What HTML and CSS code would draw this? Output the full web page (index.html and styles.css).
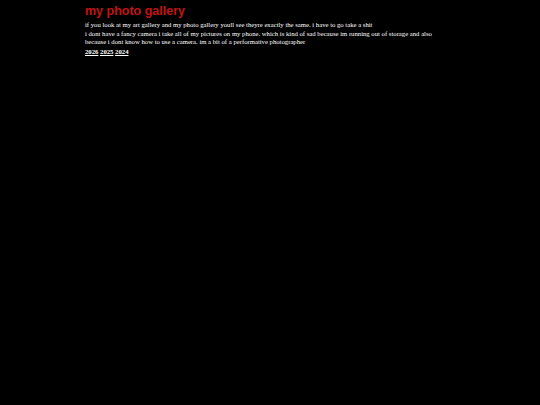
FILE: index.html
```html
<!DOCTYPE html>
<html>
<head>
<meta charset="utf-8">
<link rel="stylesheet" href="styles.css">
</head>
<body>
<div class="page">
  <h1 class="title">my photo gallery</h1>
  <p class="intro">if you look at my art gallery and my photo gallery youll see theyre exactly the same. i have to go take a shit</p>
  <p class="intro">i dont have a fancy camera i take all of my pictures on my phone. which is kind of sad because im running out of storage and also because i dont know how to use a camera. im a bit of a performative photographer</p>
  <nav class="years"><a href="#">2026</a> <a href="#">2025</a> <a href="#">2024</a></nav>
</div>
</body>
</html>
```
FILE: styles.css
```css
html, body {
  margin: 0;
  padding: 0;
  background: #000;
}
body {
  color: #fff;
  font-family: "Liberation Serif", "Times New Roman", serif;
  font-size: 6.7px;
  line-height: 8px;
}
.page {
  width: 370px;
  margin: 0 auto;
  padding-top: 4px;
}
.title {
  margin: 0 0 2px 0;
  font-family: "Liberation Sans", Arial, sans-serif;
  font-size: 12.5px;
  line-height: 15px;
  font-weight: bold;
  color: #c41414;
}
.intro {
  margin: 0 0 1px 0;
  max-width: 356px;
}
.years {
  margin-top: 2px;
}
.years a {
  color: #fff;
  font-weight: bold;
  text-decoration: underline;
}
```
